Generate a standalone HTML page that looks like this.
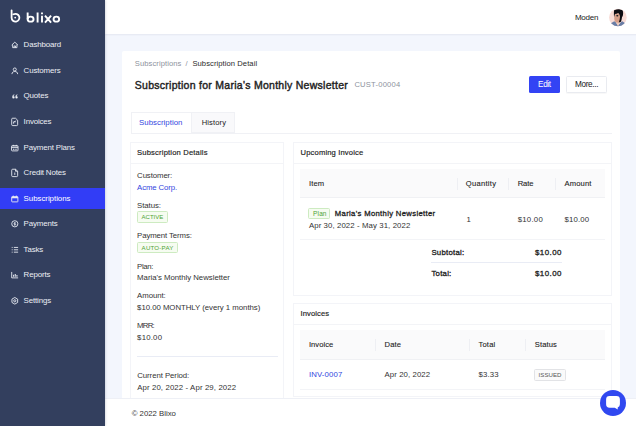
<!DOCTYPE html>
<html><head><meta charset="utf-8">
<style>
*{box-sizing:border-box;margin:0;padding:0}
html,body{width:636px;height:426px;overflow:hidden;background:#f3f6fd;font-family:"Liberation Sans",sans-serif;font-size:7.600px;color:#222}
.abs{position:absolute}
#side{position:absolute;left:0;top:0;width:104.500px;height:426px;background:#333f5e;z-index:2;box-shadow:0 0 2.500px rgba(40,50,80,.3)}
.nav{position:absolute;left:0;width:104.500px;height:22px;color:#eceef4;font-size:7.900px;line-height:22px;padding-left:23.600px;white-space:nowrap;letter-spacing:-.14px}
.nav.act{background:#323df6;color:#fff}
.nav svg{position:absolute;left:10.500px;top:7px;width:7.600px;height:7.600px;overflow:visible;stroke:#e8ebf3;fill:none;stroke-width:1.900}
#top{position:absolute;left:104.500px;top:0;width:532px;height:34px;background:#fff;box-shadow:0 1px 1.500px rgba(140,140,170,.14)}
#foot{position:absolute;left:104.500px;top:397.600px;width:532px;height:30px;background:#fff;border-top:1px solid #eef0f6}
#card{position:absolute;left:121.700px;top:51px;width:498.300px;height:360px;background:#fff;border-radius:2px}
.t{position:absolute;white-space:nowrap;line-height:10px;height:10px}
.panel{position:absolute;background:#fff;border:1px solid #f3f4f8}
.tag{position:absolute;border:1px solid #cdebc1;background:#f6fcf1;border-radius:1.5px}
.th{position:absolute;background:#fafafb;border-bottom:1px solid #f0f1f4}
.sep{position:absolute;width:1px;background:#eeeff3}
.hl{position:absolute;height:1px;background:#f3f4f7}
</style></head><body>
<div id="side">
 <svg class="abs" style="left:0;top:0" width="104" height="34" viewBox="0 0 104 34" fill="none" stroke="#fff"><path d="M11.600 10.300V17.700A3.900 3.900 0 1 0 13.550 14.320" stroke-width="1.800" stroke-linecap="round"/><circle cx="15.200" cy="17.600" r=".900" fill="#fff" stroke="none"/>
 <g stroke-width="1.900"><path d="M27.650 12.600V19.150M37.600 12.600V22.600M42 15.700V22.600M42 12.500V14.200M45 15.700L51.100 22.600M51.100 15.700L45 22.600"/><ellipse cx="30.600" cy="19.150" rx="2.950" ry="2.500"/><ellipse cx="56.350" cy="19.150" rx="2.800" ry="2.500"/></g></svg>
 <div class="nav" style="top:34.30px"><svg viewBox="0 0 16 16"><path d="M1.500 8.500L8 2.500l6.500 6M3.500 7.500v6.500h9V7.500M6.500 14v-3.500h3V14"/></svg>Dashboard</div>
 <div class="nav" style="top:59.87px"><svg viewBox="0 0 16 16"><circle cx="8" cy="5.200" r="3.200"/><path d="M2 15c0-3.800 2.600-5.500 6-5.500s6 1.700 6 5.500"/></svg>Customers</div>
 <div class="nav" style="top:85.44px"><svg viewBox="0 0 16 16"><path d="M2.700 11.200C2.700 7.700 4 5.700 7 4.700v1.800C5.800 7.100 5.200 7.800 5.100 8.800A2.500 2.500 0 1 1 2.700 11.200zM9.200 11.200c0-3.500 1.300-5.500 4.300-6.500v1.800c-1.200.6-1.800 1.300-1.900 2.300A2.500 2.500 0 1 1 9.200 11.200z" fill="#eef0f6" stroke="none"/></svg>Quotes</div>
 <div class="nav" style="top:111.01px"><svg viewBox="0 0 16 16"><path d="M3.500.500h6l4.500 4.200v9.300a2 2 0 0 1-2 2h-8.500a2 2 0 0 1-2-2v-11.500a2 2 0 0 1 2-2zM5.500 12V8h4.500M10 5.500l-3 3"/></svg>Invoices</div>
 <div class="nav" style="top:136.58px"><svg viewBox="0 0 16 16"><rect x="1.200" y="3.500" width="13.600" height="11" rx="1.500"/><path d="M4.800 1.800v2.500M11.200 1.800v2.500"/><path d="M1.200 6.800h13.600" stroke-width="2.400"/><path d="M4.200 11h3M9 11h3" stroke-width="2.200"/></svg>Payment Plans</div>
 <div class="nav" style="top:162.15px"><svg viewBox="0 0 16 16"><path d="M3.500.500h6l4.500 4.200v9.300a2 2 0 0 1-2 2h-8.500a2 2 0 0 1-2-2v-11.500a2 2 0 0 1 2-2zM8 7.500v5M9.500.500v4.200h4.500"/></svg>Credit Notes</div>
 <div class="nav act" style="top:187.800px;height:21.400px;line-height:21.400px;letter-spacing:-.04px"><svg viewBox="0 0 16 16"><rect x="1.500" y="3.500" width="13" height="11" rx="1"/><path d="M4.800 1.200v3M11.200 1.200v3"/><path d="M1.500 5.200h13" stroke-width="3.400"/></svg>Subscriptions</div>
 <div class="nav" style="top:213.29px"><svg viewBox="0 0 16 16"><circle cx="8" cy="8" r="6.500"/><path d="M10 6H7.200a1.100 1.100 0 0 0 0 2.200h1.600a1.100 1.100 0 0 1 0 2.200H6M8 4.500v7" stroke-width="1.500"/></svg>Payments</div>
 <div class="nav" style="top:238.86px"><svg viewBox="0 0 16 16"><path d="M6 3h9M6 8h9M6 13h9M1.500 3h2M1.500 8h2M1.500 13h2"/></svg>Tasks</div>
 <div class="nav" style="top:264.43px"><svg viewBox="0 0 16 16"><path d="M1.500 2v12.500h13.500"/><path d="M5.500 12V8M9 12V6.500M12.500 12V8.500" stroke-width="2.200"/></svg>Reports</div>
 <div class="nav" style="top:290.00px"><svg viewBox="0 0 16 16"><path d="M8 1l6 3.500v7L8 15l-6-3.500v-7z"/><circle cx="8" cy="8" r="2.300"/></svg>Settings</div>
</div>
<div id="top"></div>
<svg class="abs" style="left:600px;top:4px" width="36" height="26" viewBox="0 0 36 26"><defs><clipPath id="cp"><circle cx="17.900" cy="13.550" r="8.800"/></clipPath></defs><g clip-path="url(#cp)"><rect width="36" height="26" fill="#f8dcd6"/><path d="M10.500 19.500l3.800-2.300 1.500 1 2.200 3.500 2.500-3.300 1.700-1.200 3 2 1 4H10z" fill="#6a7ea6"/><path d="M15.600 17.600l2.400 4.400 2.600-4.400z" fill="#ecc9ba"/><ellipse cx="17.500" cy="13.900" rx="3.300" ry="4.700" fill="#d59e88"/><path d="M14.100 6.300c1.400-.8 2.800-1 4.200-1s3 .2 4.300.9c.6 1.600.6 3.200.4 4.800-.2 1-.6 1.600-1 2.200-.2 1.600-.5 3-1 4.500l-2.200.7c.7-2 1.200-4 1.200-6.200-.3-1.400-1-2.400-1.900-3.100-1 .6-2 .9-3.100 1-.4 1-.6 2-.7 3-.4-1.200-.5-2.300-.4-3.300 0-1.200 0-2.400.2-3.500z" fill="#0d0d12"/><ellipse cx="17.300" cy="11.700" rx="1.100" ry=".800" fill="#1a1a1e"/></g></svg>
<div id="card"></div>
<div class="abs" style="left:529.300px;top:75.500px;width:30.500px;height:17.100px;background:#3343f4;border-radius:1.500px"></div>
<div class="abs" style="left:566.100px;top:75.500px;width:41px;height:17.100px;background:#fff;border:1px solid #e9ebf0;border-radius:1.500px;box-shadow:0 1px 1px rgba(0,0,0,.03)"></div>
<div class="hl" style="left:130.500px;top:132.500px;width:481px;background:#f0f1f5"></div>
<div class="abs" style="left:130.500px;top:112.200px;width:61px;height:21.300px;background:#fff;border:1px solid #f0f1f5;border-bottom:none"></div>
<div class="abs" style="left:191.500px;top:112.200px;width:43.500px;height:20.600px;background:#f9f9fb;border:1px solid #f0f1f5;border-left:none"></div>
<div class="panel" style="left:130.300px;top:142px;width:154.200px;height:262px"></div>
<div class="hl" style="left:130.300px;top:163px;width:154.200px"></div>
<div class="tag" style="left:136.800px;top:211.400px;width:31.200px;height:11.200px"></div>
<div class="tag" style="left:136.800px;top:241.900px;width:41px;height:11.400px"></div>
<div class="hl" style="left:137px;top:356px;width:141px;background:#e9ecf5"></div>
<div class="panel" style="left:293.300px;top:142px;width:318.400px;height:154px"></div>
<div class="hl" style="left:293.300px;top:163px;width:318.400px"></div>
<div class="th" style="left:300px;top:168.900px;width:304.500px;height:29.600px"></div>
<div class="sep" style="left:457.2px;top:177.700px;height:12px"></div>
<div class="sep" style="left:508.3px;top:177.700px;height:12px"></div>
<div class="sep" style="left:555.4px;top:177.700px;height:12px"></div>
<div class="tag" style="left:308.400px;top:207.500px;width:22px;height:11.200px"></div>
<div class="hl" style="left:300px;top:238.900px;width:304.500px"></div>
<div class="hl" style="left:431px;top:262px;width:131px;background:#e9ecf5"></div>
<div class="panel" style="left:293.300px;top:303px;width:318.400px;height:94px"></div>
<div class="hl" style="left:293.300px;top:324px;width:318.400px"></div>
<div class="th" style="left:300px;top:330.100px;width:304.500px;height:29.600px"></div>
<div class="sep" style="left:375.4px;top:339px;height:11.500px"></div>
<div class="sep" style="left:469.2px;top:339px;height:11.500px"></div>
<div class="sep" style="left:525.2px;top:339px;height:11.500px"></div>
<div class="tag" style="left:534.400px;top:369px;width:31.600px;height:11.500px;border-color:#e2e3e6;background:#fafafa"></div>
<div class="hl" style="left:300px;top:388.800px;width:304.500px"></div>
<div id="foot"></div>
<div class="t" id="t0" style="left:574.90px;top:12.60px;font-size:8.0px;letter-spacing:-0.217px;color:#222">Moden</div>
<div class="t" id="t1" style="left:134.80px;top:58.60px;font-size:7.6px;letter-spacing:0.084px;color:#8d929d">Subscriptions</div>
<div class="t" id="t2" style="left:185.40px;top:58.60px;font-size:7.6px;letter-spacing:0.000px;color:#8d929d">/</div>
<div class="t" id="t3" style="left:192.40px;top:58.60px;font-size:7.6px;letter-spacing:0.077px;color:#2a2a2a">Subscription Detail</div>
<div class="t" id="t4" style="left:134.80px;top:79.50px;font-size:10.5px;letter-spacing:0.272px;color:#1f1f1f;-webkit-text-stroke:.42px #1f1f1f">Subscription for Maria's Monthly Newsletter</div>
<div class="t" id="t5" style="left:354.40px;top:79.60px;font-size:7.6px;letter-spacing:0.210px;color:#8d929d">CUST-00004</div>
<div class="t" id="t6" style="left:538.10px;top:79.80px;font-size:8.2px;letter-spacing:-0.403px;color:#fff">Edit</div>
<div class="t" id="t7" style="left:574.90px;top:79.80px;font-size:8.2px;letter-spacing:-0.314px;color:#222">More...</div>
<div class="t" id="t8" style="left:139.10px;top:117.90px;font-size:7.8px;letter-spacing:0.036px;color:#3346e0">Subscription</div>
<div class="t" id="t9" style="left:201.70px;top:117.90px;font-size:7.6px;letter-spacing:0.127px;color:#222">History</div>
<div class="t" id="t10" style="left:137.10px;top:147.80px;font-size:7.6px;letter-spacing:0.173px;color:#222;-webkit-text-stroke:.16px #222">Subscription Details</div>
<div class="t" id="t11" style="left:137.10px;top:170.90px;font-size:7.8px;letter-spacing:-0.096px;color:#333">Customer:</div>
<div class="t" id="t12" style="left:137.10px;top:182.60px;font-size:7.8px;letter-spacing:-0.130px;color:#3346e0">Acme Corp.</div>
<div class="t" id="t13" style="left:137.10px;top:200.80px;font-size:7.8px;letter-spacing:-0.064px;color:#333">Status:</div>
<div class="t" id="t14" style="left:141.60px;top:212.10px;font-size:6.0px;letter-spacing:-0.014px;color:#4ea336">ACTIVE</div>
<div class="t" id="t15" style="left:137.10px;top:230.70px;font-size:7.8px;letter-spacing:-0.107px;color:#333">Payment Terms:</div>
<div class="t" id="t16" style="left:141.60px;top:242.60px;font-size:6.1px;letter-spacing:0.223px;color:#4ea336">AUTO-PAY</div>
<div class="t" id="t17" style="left:137.10px;top:261.50px;font-size:7.8px;letter-spacing:-0.370px;color:#333">Plan:</div>
<div class="t" id="t18" style="left:137.10px;top:273.30px;font-size:7.8px;letter-spacing:-0.022px;color:#333">Maria's Monthly Newsletter</div>
<div class="t" id="t19" style="left:137.10px;top:291.10px;font-size:7.8px;letter-spacing:-0.058px;color:#333">Amount:</div>
<div class="t" id="t20" style="left:137.10px;top:302.80px;font-size:7.8px;letter-spacing:-0.029px;color:#333">$10.00 MONTHLY (every 1 months)</div>
<div class="t" id="t21" style="left:137.10px;top:320.90px;font-size:7.8px;letter-spacing:-0.779px;color:#333">MRR:</div>
<div class="t" id="t22" style="left:137.10px;top:332.90px;font-size:7.8px;letter-spacing:0.208px;color:#333">$10.00</div>
<div class="t" id="t23" style="left:137.20px;top:371.10px;font-size:7.8px;letter-spacing:-0.055px;color:#333">Current Period:</div>
<div class="t" id="t24" style="left:137.20px;top:383.00px;font-size:7.8px;letter-spacing:0.119px;color:#333">Apr 20, 2022 - Apr 29, 2022</div>
<div class="t" id="t25" style="left:131.70px;top:409.30px;font-size:7.8px;letter-spacing:-0.012px;color:#333">© 2022 Blixo</div>
<div class="t" id="t26" style="left:300.60px;top:147.80px;font-size:7.6px;letter-spacing:0.149px;color:#222;-webkit-text-stroke:.16px #222">Upcoming Invoice</div>
<div class="t" id="t27" style="left:308.90px;top:178.70px;font-size:7.6px;letter-spacing:0.173px;color:#222;-webkit-text-stroke:.1px #222">Item</div>
<div class="t" id="t28" style="left:465.80px;top:178.90px;font-size:7.6px;letter-spacing:0.274px;color:#222;-webkit-text-stroke:.1px #222">Quantity</div>
<div class="t" id="t29" style="left:517.70px;top:178.70px;font-size:7.6px;letter-spacing:-0.082px;color:#222;-webkit-text-stroke:.1px #222">Rate</div>
<div class="t" id="t30" style="left:564.50px;top:178.70px;font-size:7.6px;letter-spacing:0.146px;color:#222;-webkit-text-stroke:.1px #222">Amount</div>
<div class="t" id="t31" style="left:313.10px;top:208.70px;font-size:6.5px;letter-spacing:0.128px;color:#4ea336">Plan</div>
<div class="t" id="t32" style="left:334.80px;top:208.90px;font-size:7.7px;letter-spacing:0.334px;color:#222;-webkit-text-stroke:.3px #222">Maria's Monthly Newsletter</div>
<div class="t" id="t33" style="left:308.90px;top:221.20px;font-size:7.8px;letter-spacing:0.099px;color:#333">Apr 30, 2022 - May 31, 2022</div>
<div class="t" id="t34" style="left:466.60px;top:214.50px;font-size:7.8px;letter-spacing:0.000px;color:#333">1</div>
<div class="t" id="t35" style="left:517.70px;top:215.00px;font-size:7.8px;letter-spacing:0.248px;color:#333">$10.00</div>
<div class="t" id="t36" style="left:564.50px;top:215.00px;font-size:7.8px;letter-spacing:0.148px;color:#333">$10.00</div>
<div class="t" id="t37" style="left:431.40px;top:247.80px;font-size:7.8px;letter-spacing:0.265px;color:#222;-webkit-text-stroke:.3px #222">Subtotal:</div>
<div class="t" id="t38" style="left:535.00px;top:247.80px;font-size:7.9px;letter-spacing:0.452px;color:#222;-webkit-text-stroke:.3px #222">$10.00</div>
<div class="t" id="t39" style="left:431.40px;top:269.20px;font-size:7.8px;letter-spacing:0.252px;color:#222;-webkit-text-stroke:.3px #222">Total:</div>
<div class="t" id="t40" style="left:535.00px;top:269.20px;font-size:7.9px;letter-spacing:0.452px;color:#222;-webkit-text-stroke:.3px #222">$10.00</div>
<div class="t" id="t41" style="left:300.60px;top:308.80px;font-size:7.6px;letter-spacing:0.077px;color:#222;-webkit-text-stroke:.16px #222">Invoices</div>
<div class="t" id="t42" style="left:308.90px;top:340.05px;font-size:7.6px;letter-spacing:0.056px;color:#222;-webkit-text-stroke:.1px #222">Invoice</div>
<div class="t" id="t43" style="left:384.60px;top:340.05px;font-size:7.6px;letter-spacing:0.084px;color:#222;-webkit-text-stroke:.1px #222">Date</div>
<div class="t" id="t44" style="left:478.40px;top:340.05px;font-size:7.6px;letter-spacing:0.213px;color:#222;-webkit-text-stroke:.1px #222">Total</div>
<div class="t" id="t45" style="left:534.80px;top:340.05px;font-size:7.6px;letter-spacing:0.114px;color:#222;-webkit-text-stroke:.1px #222">Status</div>
<div class="t" id="t46" style="left:308.90px;top:370.30px;font-size:7.8px;letter-spacing:0.126px;color:#3346e0">INV-0007</div>
<div class="t" id="t47" style="left:384.60px;top:370.30px;font-size:7.8px;letter-spacing:0.077px;color:#333">Apr 20, 2022</div>
<div class="t" id="t48" style="left:478.40px;top:370.20px;font-size:7.8px;letter-spacing:0.171px;color:#333">$3.33</div>
<div class="t" id="t49" style="left:538.60px;top:369.60px;font-size:6.1px;letter-spacing:0.019px;color:#555">ISSUED</div>
<div class="abs" style="left:599.800px;top:389.600px;width:26.400px;height:26.400px;border-radius:50%;background:#3048f0"></div>
<svg class="abs" style="left:605.200px;top:395.200px" width="16" height="16" viewBox="0 0 16 16"><path d="M4.500 1.100h7a3.400 3.400 0 0 1 3.400 3.400v4.800a3.400 3.400 0 0 1-2.200 3.200v2.100l-2.900-1.900h-5.300a3.400 3.400 0 0 1-3.400-3.400v-4.800a3.400 3.400 0 0 1 3.400-3.400z" fill="#fff"/></svg>
</body></html>
